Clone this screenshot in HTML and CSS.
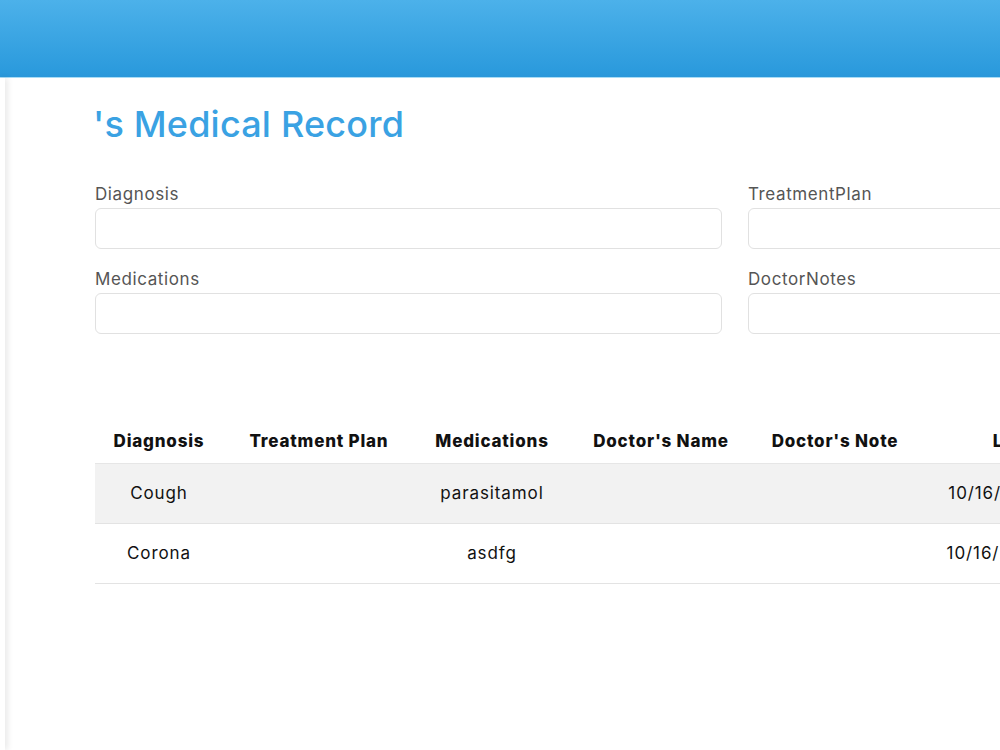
FILE: index.html
```html
<!DOCTYPE html>
<html lang="en">
<head>
    <meta charset="UTF-8">
    <meta name="viewport" content="width=device-width, initial-scale=1.0">
    <title>Medical Record</title>
    <link rel="stylesheet" href="styles.css">
</head>
<body>
    <header class="topbar"></header>
    <div class="layout">
        <aside class="sidebar"></aside>
        <main class="record">
            <h1 class="record-title">'s Medical Record</h1>
            <form class="record-form">
                <div class="field">
                    <label>Diagnosis</label>
                    <input type="text">
                </div>
                <div class="field">
                    <label>TreatmentPlan</label>
                    <input type="text">
                </div>
                <div class="field">
                    <label>Medications</label>
                    <input type="text">
                </div>
                <div class="field">
                    <label>DoctorNotes</label>
                    <input type="text">
                </div>
            </form>
            <table class="history">
                <thead>
                    <tr>
                        <th class="c-diag">Diagnosis</th>
                        <th class="c-plan">Treatment Plan</th>
                        <th class="c-meds">Medications</th>
                        <th class="c-doc">Doctor's Name</th>
                        <th class="c-note">Doctor's Note</th>
                        <th class="c-date">Last Updated</th>
                    </tr>
                </thead>
                <tbody>
                    <tr>
                        <td>Cough</td>
                        <td></td>
                        <td>parasitamol</td>
                        <td></td>
                        <td></td>
                        <td>10/16/2023, 9:14:32 AM</td>
                    </tr>
                    <tr>
                        <td>Corona</td>
                        <td></td>
                        <td>asdfg</td>
                        <td></td>
                        <td></td>
                        <td>10/16/2023, 9:20:05 AM</td>
                    </tr>
                </tbody>
            </table>
        </main>
    </div>
</body>
</html>
```

FILE: styles.css
```css
*{
   margin: 0;
   padding: 0;
   box-sizing: border-box;
}
body{
   font-family: Inter, "Open Sans", sans-serif;
   background-color: #fff;
   overflow: hidden;
   width: 1000px;
   height: 750px;
}
.topbar{
   height: 78px;
   background: linear-gradient(to bottom, #4cb1ea, #2c9bdd 90%, #2a97da);
   border-bottom: 1px solid #a9dcf5;
}
.layout{
   display: flex;
   height: 672px;
}
.sidebar{
   width: 5px;
   flex-shrink: 0;
   background: #fff;
   box-shadow: 2px 0 6px rgba(0, 0, 0, 0.12);
   position: relative;
   z-index: 1;
}
.record{
   padding: 24px 0 0 90px;
   width: 1500px;
   flex-shrink: 0;
}
.record-title{
   color: #3aa2e3;
   font-size: 36px;
   font-weight: 500;
   letter-spacing: 0.2px;
   line-height: 44px;
   margin-bottom: 37px;
   margin-left: -2px;
}
.record-form{
   display: grid;
   grid-template-columns: 627px 627px;
   column-gap: 26px;
   row-gap: 19px;
}
.field label{
   display: block;
   font-size: 17px;
   color: #555;
   line-height: 23px;
   margin-bottom: 2px;
   letter-spacing: 0.6px;
}
.field input{
   width: 100%;
   height: 41px;
   border: 1px solid #e1e1e1;
   border-radius: 6px;
   background: #fff;
   outline: none;
}
.history{
   margin-top: 88px;
   border-collapse: collapse;
   font-size: 17px;
   color: #111;
}
.history th{
   font-weight: 800;
   height: 41px;
   text-align: center;
   letter-spacing: 0.8px;
   border-bottom: 1px solid #e6e6e6;
   padding-top: 4px;
   vertical-align: top;
   line-height: 30px;
}
.history td{
   height: 60px;
   text-align: center;
   border-bottom: 1px solid #e3e3e3;
   letter-spacing: 0.9px;
}
.history tbody tr:nth-child(odd){
   background-color: #f2f2f2;
}
.c-diag{ width: 128px; }
.c-plan{ width: 192px; }
.c-meds{ width: 154px; }
.c-doc{ width: 184px; }
.c-note{ width: 164px; }
.c-date{ width: 272px; }
```
